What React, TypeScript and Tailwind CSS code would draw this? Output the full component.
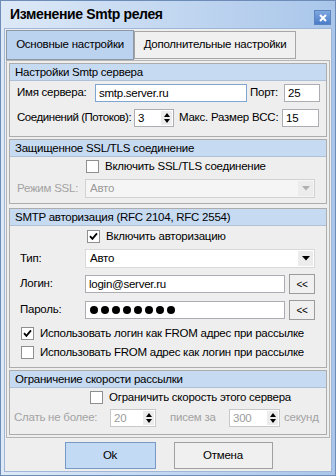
import React from "react";

function Check({ checked }: { checked?: boolean }) {
  return (
    <span className="w-[13px] h-[13px] border border-[#8e8f8f] bg-white flex items-center justify-center shrink-0">
      {checked && (
        <svg width="9" height="9" viewBox="0 0 9 9">
          <path d="M1 4.2 L3.4 6.8 L8 1.4" stroke="#000" strokeWidth="1.8" fill="none" />
        </svg>
      )}
    </span>
  );
}

function DownTri({ color = "#000" }: { color?: string }) {
  return (
    <svg width="8" height="5" viewBox="0 0 8 5">
      <path d="M0 0 L8 0 L4 4.5 Z" fill={color} />
    </svg>
  );
}

function Spin({ value, w, disabled }: { value: string; w: string; disabled?: boolean }) {
  return (
    <div className={`${w} h-[18px] shrink-0 border ${disabled ? "border-[#c8c8c8]" : "border-[#abadb3]"} bg-white flex items-stretch`}>
      <span className={`flex-1 pl-[3px] leading-[16px] ${disabled ? "text-[#9c9c9c]" : "text-black"}`}>{value}</span>
      <span className="w-[11px] my-[1px] mr-[1px] bg-[#ececec] flex flex-col items-center justify-center gap-[2px]">
        <svg width="6" height="4" viewBox="0 0 6 4">
          <path d="M0 4 L6 4 L3 0 Z" fill="#000" />
        </svg>
        <svg width="6" height="4" viewBox="0 0 6 4">
          <path d="M0 0 L6 0 L3 4 Z" fill="#000" />
        </svg>
      </span>
    </div>
  );
}

function Header({ children }: { children: React.ReactNode }) {
  return (
    <div className="h-[17px] bg-[#c6daf2] border-b border-[#aebfd6] pl-[5px] leading-[16px] text-black">
      {children}
    </div>
  );
}

export default function App() {
  return (
    <div className="w-[336px] h-[476px] border border-[#6e8cb8] bg-gradient-to-r from-[#dde9f7] to-[#a9c6ea] flex flex-col font-['Liberation_Sans',Arial,sans-serif] text-[11.5px] tracking-[-0.25px] whitespace-nowrap text-black overflow-hidden">
      {/* title bar */}
      <div className="h-[27px] shrink-0 flex items-center pl-[9px] relative">
        <span className="text-[14px] font-bold tracking-[-0.35px] text-black">Изменение Smtp релея</span>
        <div className="absolute right-[4px] top-[9px] w-[17px] h-[15px] bg-gradient-to-b from-[#7fa7df] to-[#4a7cc8] border border-[#5b83c0] flex items-center justify-center">
          <svg width="8" height="8" viewBox="0 0 8 8">
            <path d="M1 1 L7 7 M7 1 L1 7" stroke="#fff" strokeWidth="2" />
          </svg>
        </div>
      </div>

      {/* body */}
      <div className="flex-1 mx-[3px] mb-[3px] bg-[#eeeeee] border border-[#9fb6d6] flex flex-col">
        {/* tabs */}
        <div className="flex items-end pl-[1px] pt-[1px] h-[31px]">
          <div className="w-[128px] h-[30px] bg-[#bcd3f0] border border-[#8c98a8] flex items-center justify-center">
            Основные настройки
          </div>
          <div className="w-[162px] h-[28px] mb-[1px] bg-[#f0f0f0] border border-[#a6a6a6] flex items-center justify-center">
            Дополнительные настройки
          </div>
        </div>

        {/* panel */}
        <div className="mx-[1px] border border-[#b5b5b5] bg-[#eeeeee] px-[2px] pt-[2px] pb-[2px] flex flex-col">
          {/* section 1 */}
          <div className="border border-[#acacac] flex flex-col">
            <Header>Настройки Smtp сервера</Header>
            <div className="flex items-center h-[18px] mt-[3px] pl-[7px]">
              <span className="w-[78px] shrink-0">Имя сервера:</span>
              <div className="w-[152px] shrink-0 h-[18px] border border-[#7fa5d3] bg-white pl-[3px] leading-[16px]">smtp.server.ru</div>
              <span className="w-[34px] shrink-0 ml-[3px]">Порт:</span>
              <div className="w-[36px] shrink-0 h-[18px] border border-[#abadb3] bg-white pl-[3px] leading-[16px]">25</div>
            </div>
            <div className="flex items-center h-[18px] mt-[7px] mb-[9px] pl-[7px]">
              <span className="w-[117px] shrink-0 tracking-[-0.45px]">Соединений (Потоков):</span>
              <Spin value="3" w="w-[40px]" />
              <span className="w-[103px] shrink-0 ml-[5px]">Макс. Размер BCC:</span>
              <div className="w-[37px] shrink-0 h-[18px] border border-[#abadb3] bg-white pl-[3px] leading-[16px]">15</div>
            </div>
          </div>

          {/* section 2 */}
          <div className="mt-[2px] border border-[#acacac] flex flex-col">
            <Header>Защищенное SSL/TLS соединение</Header>
            <div className="flex items-center h-[13px] mt-[3px] pl-[76px] gap-[6px]">
              <Check />
              <span>Включить SSL/TLS соединение</span>
            </div>
            <div className="flex items-center h-[19px] mt-[6px] mb-[5px] pl-[7px]">
              <span className="w-[68px] shrink-0 text-[#a3a3a3]">Режим SSL:</span>
              <div className="w-[230px] shrink-0 h-[19px] border border-[#d2d2d2] bg-[#f5f5f5] flex items-center">
                <span className="flex-1 pl-[4px] text-[#9a9a9a]">Авто</span>
                <span className="w-[15px] h-[15px] mr-[1px] bg-[#ececec] flex items-center justify-center">
                  <DownTri color="#b0b0b0" />
                </span>
              </div>
            </div>
          </div>

          {/* section 3 */}
          <div className="mt-[4px] border border-[#acacac] flex flex-col">
            <Header>SMTP авторизация (RFC 2104, RFC 2554)</Header>
            <div className="flex items-center h-[13px] mt-[4px] pl-[77px] gap-[6px]">
              <Check checked />
              <span>Включить авторизацию</span>
            </div>
            <div className="flex items-center h-[19px] mt-[6px] pl-[10px]">
              <span className="w-[65px] shrink-0">Тип:</span>
              <div className="w-[230px] shrink-0 h-[19px] border border-[#d9d9d9] bg-white flex items-center">
                <span className="flex-1 pl-[4px]">Авто</span>
                <span className="w-[15px] h-[15px] mr-[1px] bg-[#ececec] flex items-center justify-center">
                  <DownTri />
                </span>
              </div>
            </div>
            <div className="flex items-center h-[20px] mt-[6px] pl-[10px]">
              <span className="w-[65px] shrink-0">Логин:</span>
              <div className="w-[200px] shrink-0 h-[18px] border border-[#abadb3] bg-white pl-[3px] leading-[16px]">login@server.ru</div>
              <div className="w-[26px] shrink-0 h-[20px] ml-[4px] border border-[#9c9c9c] bg-[#f0f0f0] flex items-center justify-center text-[10px]">&lt;&lt;</div>
            </div>
            <div className="flex items-center h-[20px] mt-[6px] pl-[10px]">
              <span className="w-[65px] shrink-0">Пароль:</span>
              <div className="w-[200px] shrink-0 h-[18px] border border-[#abadb3] bg-white pl-[4px] flex items-center gap-[3px]">
                {Array.from({ length: 8 }).map((_, i) => (
                  <span key={i} className="w-[8px] h-[8px] rounded-full bg-black" />
                ))}
              </div>
              <div className="w-[26px] shrink-0 h-[20px] ml-[4px] border border-[#9c9c9c] bg-[#f0f0f0] flex items-center justify-center text-[10px]">&lt;&lt;</div>
            </div>
            <div className="flex items-center h-[13px] mt-[7px] pl-[11px] gap-[6px]">
              <Check checked />
              <span>Использовать логин как FROM адрес при рассылке</span>
            </div>
            <div className="flex items-center h-[13px] mt-[6px] mb-[8px] pl-[11px] gap-[6px]">
              <Check />
              <span>Использовать FROM адрес как логин при рассылке</span>
            </div>
          </div>

          {/* section 4 */}
          <div className="mt-[2px] border border-[#acacac] flex flex-col">
            <Header>Ограничение скорости рассылки</Header>
            <div className="flex items-center h-[13px] mt-[3px] pl-[80px] gap-[6px]">
              <Check />
              <span>Ограничить скорость этого сервера</span>
            </div>
            <div className="flex items-center h-[18px] mt-[5px] mb-[7px] pl-[4px] text-[#a3a3a3]">
              <span className="w-[96px] shrink-0">Слать не более:</span>
              <Spin value="20" w="w-[46px]" disabled />
              <span className="w-[59px] shrink-0 ml-[14px]">писем за</span>
              <Spin value="300" w="w-[51px]" disabled />
              <span className="ml-[4px]">секунд</span>
            </div>
          </div>
        </div>

        {/* buttons */}
        <div className="flex justify-center gap-[18px] mt-[4px] pl-[1px]">
          <div className="w-[91px] h-[27px] border border-[#7799c4] bg-[#c3daf4] flex items-center justify-center">Ok</div>
          <div className="w-[99px] h-[27px] border border-[#a0a0a0] bg-[#f0f0f0] flex items-center justify-center">Отмена</div>
        </div>
      </div>
    </div>
  );
}
